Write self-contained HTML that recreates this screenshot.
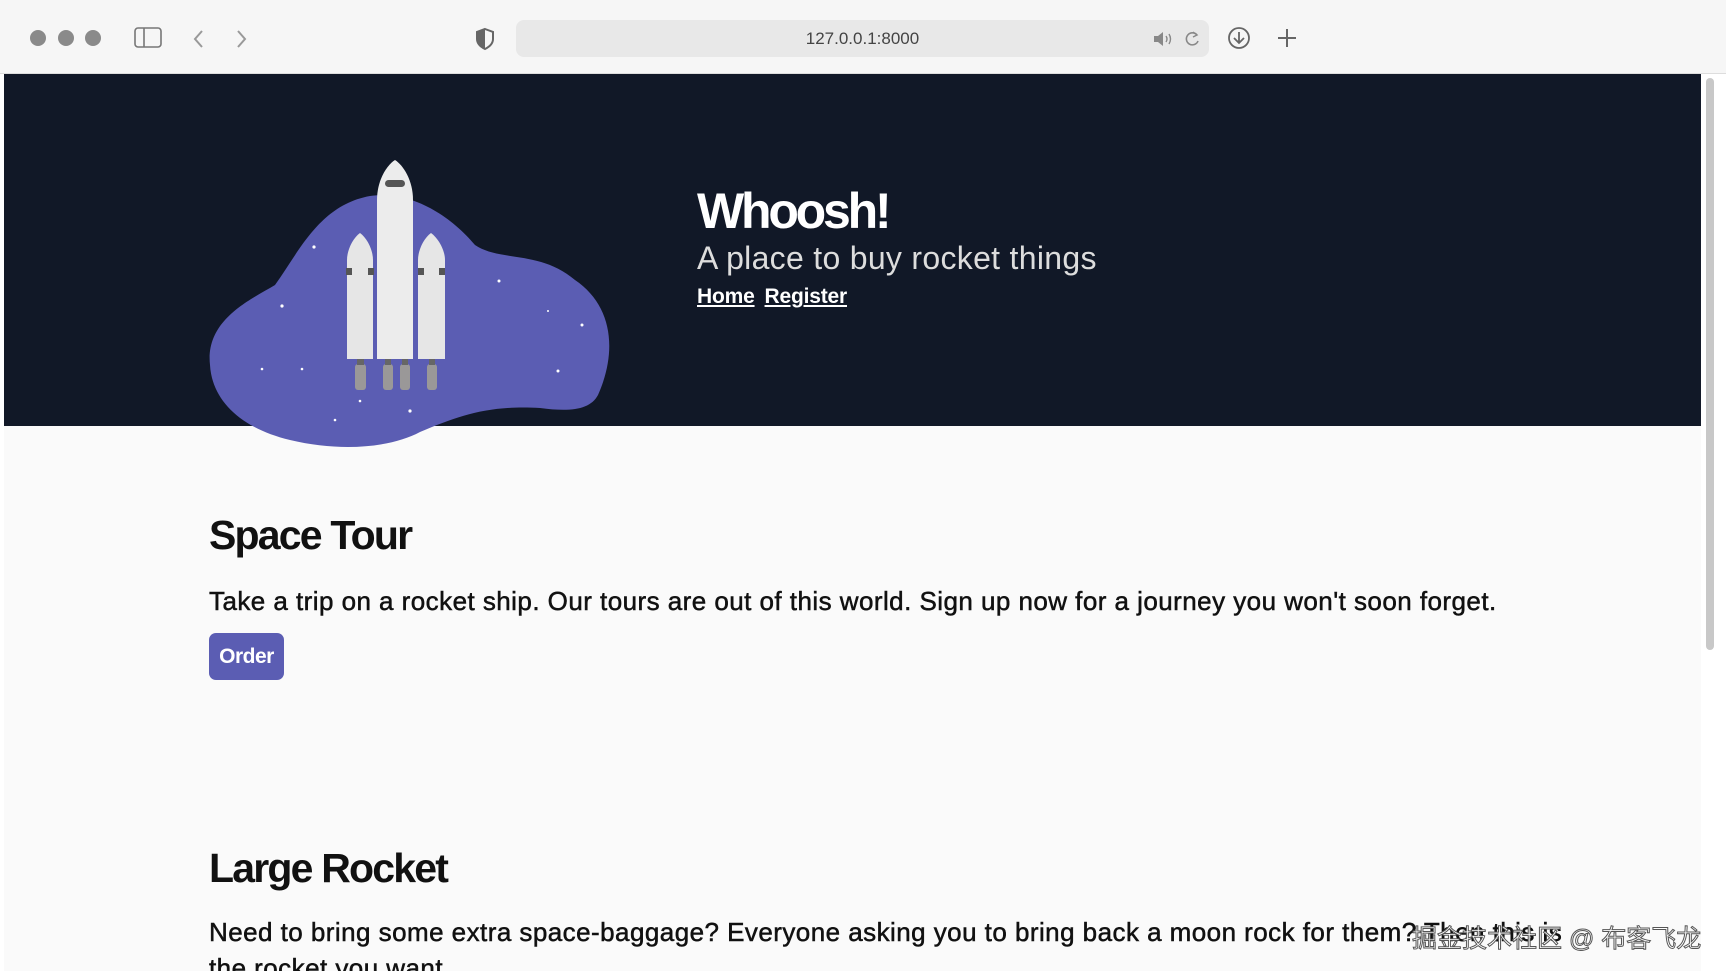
<!DOCTYPE html>
<html><head><meta charset="utf-8"><style>
*{margin:0;padding:0;box-sizing:border-box}
body{width:1726px;height:974px;overflow:hidden;background:#fff;font-family:"Liberation Sans",Arial,sans-serif;position:relative}
.chrome{position:absolute;left:0;top:0;width:1726px;height:74px;background:#f6f6f6;border-bottom:1px solid #ddd}
.dot{position:absolute;top:30px;width:16px;height:16px;border-radius:50%;background:#8a8a8a}
.url{position:absolute;left:516px;top:20px;width:693px;height:37px;background:#e8e8e8;border-radius:8px;font-size:17px;color:#444;text-align:center;line-height:37px}
.hdr{position:absolute;left:4px;top:74px;width:1697px;height:352px;background:#111827}
.main{position:absolute;left:4px;top:426px;width:1697px;height:545px;background:#fafafa;overflow:hidden}
.sb{position:absolute;left:1706px;top:78px;width:8px;height:572px;border-radius:4px;background:#c8c8c8}
h1{position:absolute;left:697px;top:182px;font-size:50px;color:#fff;font-weight:bold;letter-spacing:-3.2px}
.sub{position:absolute;left:697px;top:240px;font-size:32px;color:#ddd;letter-spacing:0.3px}
.nav{position:absolute;left:697px;top:285px;font-size:21px;color:#fff;font-weight:bold;letter-spacing:-0.2px}
.nav a{color:#fff;text-decoration:underline;margin-right:10px}
h2{position:absolute;left:205px;font-size:41px;color:#111;font-weight:bold;letter-spacing:-1.8px}
p{position:absolute;left:205px;font-size:26px;color:#111;white-space:nowrap;letter-spacing:0.45px;-webkit-text-stroke:0.5px #111}
.btn{position:absolute;left:205px;top:207px;width:75px;height:47px;background:#5b5db3;border-radius:7px;color:#fff;font-size:21px;font-weight:bold;text-align:center;line-height:47px;letter-spacing:-0.5px}
</style></head><body>
<div class="chrome">
<div class="dot" style="left:30px"></div><div class="dot" style="left:58px"></div><div class="dot" style="left:85px"></div>
<svg style="position:absolute;left:134px;top:27px" width="28" height="22"><rect x="1" y="1" width="26" height="19" rx="3" fill="none" stroke="#777" stroke-width="1.6"/><line x1="10" y1="1" x2="10" y2="20" stroke="#777" stroke-width="1.6"/></svg>
<svg style="position:absolute;left:192px;top:28px" width="60" height="22"><path d="M10 3 L3 11 L10 19" fill="none" stroke="#999" stroke-width="2"/><path d="M54 3 L61 11 L54 19" fill="none" stroke="#999" stroke-width="2" transform="translate(-8 0)"/></svg>
<svg style="position:absolute;left:475px;top:27px" width="20" height="24"><path d="M10 2 L18 5 V12 C18 17 14 20 10 22 C6 20 2 17 2 12 V5 Z" fill="none" stroke="#666" stroke-width="2"/><path d="M10 2 V22 C6 20 2 17 2 12 V5Z" fill="#666"/></svg>
<div class="url">127.0.0.1:8000</div>
<svg style="position:absolute;left:1152px;top:30px" width="22" height="18"><path d="M2 6 H6 L11 2 V16 L6 12 H2Z" fill="#888"/><path d="M14 6 Q16 9 14 12 M17 4 Q20 9 17 14" fill="none" stroke="#888" stroke-width="1.4"/></svg>
<svg style="position:absolute;left:1183px;top:29px" width="18" height="20"><path d="M14 6 A6 6 0 1 0 15 12" fill="none" stroke="#888" stroke-width="1.6"/><path d="M10 3 L14 6 L10 8" fill="none" stroke="#888" stroke-width="1.4"/></svg>
<svg style="position:absolute;left:1227px;top:26px" width="24" height="24"><circle cx="12" cy="12" r="10" fill="none" stroke="#666" stroke-width="1.8"/><path d="M12 6 V17 M7 12 L12 17 L17 12" fill="none" stroke="#666" stroke-width="1.8"/></svg>
<svg style="position:absolute;left:1277px;top:28px" width="20" height="20"><path d="M10 1 V19 M1 10 H19" stroke="#666" stroke-width="2"/></svg>
</div>
<div class="hdr"></div>
<div class="main">
<h2 style="top:86px">Space Tour</h2>
<p style="top:160px">Take a trip on a rocket ship. Our tours are out of this world. Sign up now for a journey you won't soon forget.</p>
<div class="btn">Order</div>
<h2 style="top:419px">Large Rocket</h2>
<p style="top:491px">Need to bring some extra space-baggage? Everyone asking you to bring back a moon rock for them? Then this is</p>
<p style="top:527px">the rocket you want.</p>
</div>
<div class="sb"></div>
<svg style="position:absolute;left:209px;top:160px" width="403" height="290" viewBox="209 160 403 290">
<path d="M210 365 C205 320 250 300 275 285 C300 250 320 205 370 196 C410 190 450 215 475 245 C500 262 540 250 575 280 C612 305 618 350 598 395 C590 410 570 412 540 408 C490 405 460 415 420 432 C390 448 340 452 290 440 C240 428 212 400 210 365Z" fill="#5b5db3"/>
<g fill="#fff"><circle cx="314" cy="247" r="1.6"/><circle cx="282" cy="306" r="1.6"/><circle cx="262" cy="369" r="1.3"/><circle cx="302" cy="369" r="1.3"/><circle cx="499" cy="281" r="1.5"/><circle cx="582" cy="325" r="1.5"/><circle cx="558" cy="371" r="1.5"/><circle cx="410" cy="411" r="1.6"/><circle cx="360" cy="401" r="1.3"/><circle cx="335" cy="420" r="1.3"/><circle cx="548" cy="311" r="1"/></g>
<path d="M377 359 V200 C377 180 387 165 395 160 C403 165 413 180 413 200 V359Z" fill="#ececec"/>
<rect x="385" y="180" width="20" height="7" rx="3.5" fill="#555"/>
<path d="M347 359 V260 C347 250 353 238 360 233 C367 238 373 250 373 260 V359Z" fill="#e6e6e6"/>
<path d="M418 359 V260 C418 250 424 238 431 233 C438 238 445 250 445 260 V359Z" fill="#e6e6e6"/>
<g fill="#555"><rect x="346" y="268" width="6" height="7"/><rect x="368" y="268" width="6" height="7"/><rect x="418" y="268" width="6" height="7"/><rect x="439" y="268" width="6" height="7"/></g>
<g fill="#9a9898"><rect x="355" y="364" width="11" height="26" rx="3"/><rect x="383" y="364" width="10" height="26" rx="3"/><rect x="400" y="364" width="10" height="26" rx="3"/><rect x="427" y="364" width="10" height="26" rx="3"/></g>
<g fill="#666"><rect x="357" y="359" width="7" height="6"/><rect x="385" y="359" width="6" height="6"/><rect x="402" y="359" width="6" height="6"/><rect x="429" y="359" width="6" height="6"/></g>
</svg>
<h1>Whoosh!</h1>
<div class="sub">A place to buy rocket things</div>
<div class="nav"><a>Home</a><a>Register</a></div>
<div style="position:absolute;left:1412px;top:919px;font-size:25px;color:#fff;-webkit-text-stroke:1px #555;font-family:'Liberation Sans','Noto Sans CJK SC',sans-serif;white-space:nowrap">掘金技术社区 @ 布客飞龙</div>
</body></html>
